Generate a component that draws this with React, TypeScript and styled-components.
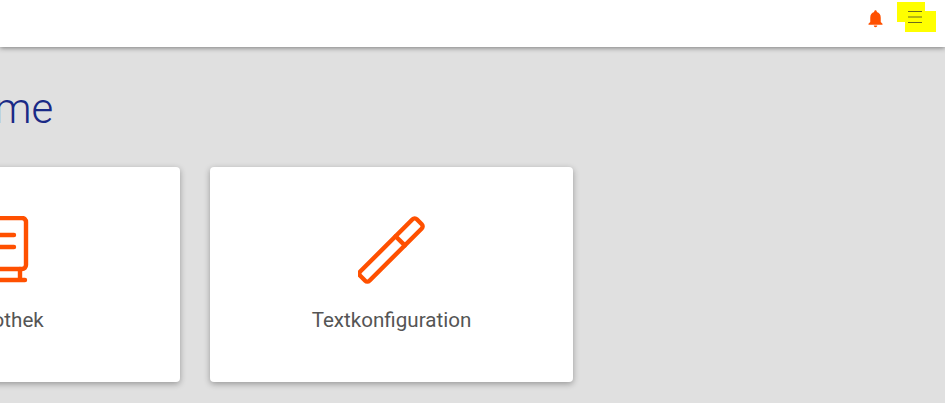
import React from 'react';
import styled, { createGlobalStyle } from 'styled-components';
import { MdNotifications } from 'react-icons/md';

const GlobalStyle = createGlobalStyle`
  html, body {
    margin: 0;
    padding: 0;
    height: 100%;
    overflow: hidden;
    background: #e0e0e0;
    font-family: Roboto, "Liberation Sans", sans-serif;
  }
`;

const Page = styled.div`
  width: 945px;
  height: 403px;
  overflow: hidden;
  background: #e0e0e0;
`;

const Header = styled.header`
  height: 47px;
  background: #fff;
  box-shadow: 0 1px 5px rgba(0, 0, 0, 0.45);
  display: flex;
  align-items: center;
  justify-content: flex-end;
  gap: 11px;
  padding-right: 8px;
`;

const BellButton = styled.span`
  display: flex;
  color: #ff5000;
  font-size: 21px;
  margin-top: -10px;
`;

const MenuButton = styled.svg`
  display: block;
  width: 40px;
  height: 30px;
  margin-top: -13px;
`;

const Main = styled.main`
  margin-left: -183px;
`;

const Title = styled.h1`
  margin: 35px 0 32px;
  font-size: 42px;
  line-height: 53px;
  font-weight: 300;
  color: #1a2a86;
  padding-left: 124px;
`;

const Cards = styled.div`
  display: flex;
  gap: 30px;
`;

const Card = styled.div`
  width: 363px;
  height: 215px;
  background: #fff;
  border-radius: 4px;
  box-shadow: 0 2px 6px rgba(0, 0, 0, 0.32);
  display: flex;
  flex-direction: column;
  align-items: center;
  padding-top: 49px;
  box-sizing: border-box;
`;

const CardIcon = styled.svg`
  display: block;
  width: 68px;
  height: 68px;
  fill: none;
  stroke: #ff5000;
  stroke-width: 4.4;
  stroke-linecap: round;
  stroke-linejoin: round;
`;

const CardLabel = styled.div`
  margin-top: 24px;
  font-size: 20.6px;
  line-height: 24px;
  color: #555;
`;

export default function App() {
  return (
    <Page>
      <GlobalStyle />
      <Header>
        <BellButton>
          <MdNotifications />
        </BellButton>
        <MenuButton viewBox="0 0 40 30">
          <path d="M0 0h28v9h11v21H8v-10H0z" fill="#ffff00" />
          <path d="M11 9.5h14M11 15h14M11 20.5h14" stroke="#6a6a20" strokeWidth="1.2" />
        </MenuButton>
      </Header>
      <Main>
        <Title>Home</Title>
        <Cards>
          <Card>
            <CardIcon viewBox="0 0 68 68">
              <rect x="6" y="2" width="55" height="51" rx="4" />
              <path d="M18 19h31M18 31h31M6 64h54M55 53v11" />
            </CardIcon>
            <CardLabel>Bibliothek</CardLabel>
          </Card>
          <Card>
            <CardIcon viewBox="0 0 68 68">
              <g transform="rotate(-45 33 34)">
                <rect x="-7" y="27.5" width="80" height="13" rx="3" />
                <path d="M46 27.5v13" />
              </g>
            </CardIcon>
            <CardLabel>Textkonfiguration</CardLabel>
          </Card>
        </Cards>
      </Main>
    </Page>
  );
}
